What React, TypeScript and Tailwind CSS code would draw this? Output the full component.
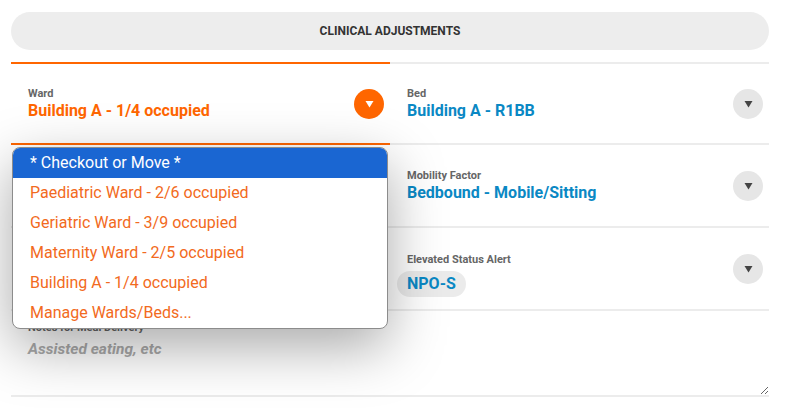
import React from 'react'

function Caret({ active }: { active?: boolean }) {
  return (
    <div
      className={
        active
          ? 'flex h-[30px] w-[30px] shrink-0 items-center justify-center rounded-full bg-[#ff6600]'
          : 'flex h-[30px] w-[30px] shrink-0 items-center justify-center rounded-full bg-[#e6e6e6]'
      }
    >
      <svg width="9" height="8" viewBox="0 0 9 8" aria-hidden="true">
        <polygon points="0.5,1 8.5,1 4.5,7.5" fill={active ? '#ffffff' : '#444444'} />
      </svg>
    </div>
  )
}

function Field({
  label,
  value,
  active,
  tone = 'blue',
  className = '',
}: {
  label: string
  value: string
  active?: boolean
  tone?: 'blue' | 'orange'
  className?: string
}) {
  return (
    <div className={`flex h-[83px] items-center pl-[17px] pr-[6px] ${className}`}>
      <div className="flex min-w-0 flex-1 flex-col">
        <span className="text-[11px] font-bold leading-[14px] text-[#666]">{label}</span>
        <span
          className={
            tone === 'orange'
              ? 'text-[16px] font-bold leading-[20px] text-[#ff6600]'
              : 'text-[16px] font-bold leading-[20px] text-[#0a88c4]'
          }
        >
          {value}
        </span>
      </div>
      <Caret active={active} />
    </div>
  )
}

const options = [
  'Paediatric Ward - 2/6 occupied',
  'Geriatric Ward - 3/9 occupied',
  'Maternity Ward - 2/5 occupied',
  'Building A - 1/4 occupied',
  'Manage Wards/Beds...',
]

export default function App() {
  return (
    <div className="h-[408px] w-full overflow-hidden bg-white pl-[11px] pr-[24px] pt-[12px] font-['Roboto',sans-serif]">
      <div className="flex h-[38px] items-center justify-center rounded-full bg-[#ededed]">
        <span className="text-[12px] font-bold uppercase text-[#333]">Clinical Adjustments</span>
      </div>

      <div className="relative mt-[12px] grid grid-cols-2">
        <Field
          label="Ward"
          value="Building A - 1/4 occupied"
          tone="orange"
          active
          className="border-y-2 border-[#ff6600]"
        />
        <Field
          label="Bed"
          value="Building A - R1BB"
          className="border-y-2 border-[#ececec]"
        />
        {/* left cells of rows 2 and 3 sit under the open list */}
        <div className="h-[83px] border-b-2 border-[#ececec]" />
        <Field
          label="Mobility Factor"
          value="Bedbound - Mobile/Sitting"
          className="border-b-2 border-[#ececec]"
        />
        <div className="h-[83px] border-b-2 border-[#ececec]" />
        <div className="flex h-[83px] items-center border-b-2 border-[#ececec] pl-[17px] pr-[6px]">
          <div className="mt-[12px] flex flex-1 flex-col">
            <span className="text-[11px] font-bold leading-[14px] text-[#666]">
              Elevated Status Alert
            </span>
            <span className="-ml-[10px] mt-[4px] self-start rounded-full bg-[#ebebeb] px-[10px] py-[3px] text-[16px] font-bold leading-[20px] text-[#0a88c4]">
              NPO-S
            </span>
          </div>
          <Caret />
        </div>

        <div className="col-span-2 flex h-[86px] flex-col border-b-2 border-[#ececec] pt-[10px]">
          <span className="pl-[17px] text-[11px] font-bold leading-[14px] text-[#666]">
            Notes for Meal Delivery
          </span>
          <textarea
            placeholder="Assisted eating, etc"
            className="mt-[4px] h-[58px] w-full resize-y bg-transparent pl-[17px] pr-[6px] text-[15.5px] font-bold italic leading-[20px] text-[#444] outline-none placeholder:text-[#aaa]"
          />
        </div>

        <div className="absolute left-[1px] top-[85px] z-10 w-[376px] overflow-hidden rounded-[8px] border border-[#8c8c8c] bg-white shadow-[0_18px_56px_rgba(0,0,0,0.34)]">
          <div className="flex h-[30px] items-center bg-[#1a66d2] pl-[17px] text-[16px] text-white">
            * Checkout or Move *
          </div>
          {options.map((o) => (
            <div key={o} className="flex h-[30px] items-center pl-[17px] text-[16px] text-[#f26a21]">
              {o}
            </div>
          ))}
        </div>
      </div>
    </div>
  )
}
